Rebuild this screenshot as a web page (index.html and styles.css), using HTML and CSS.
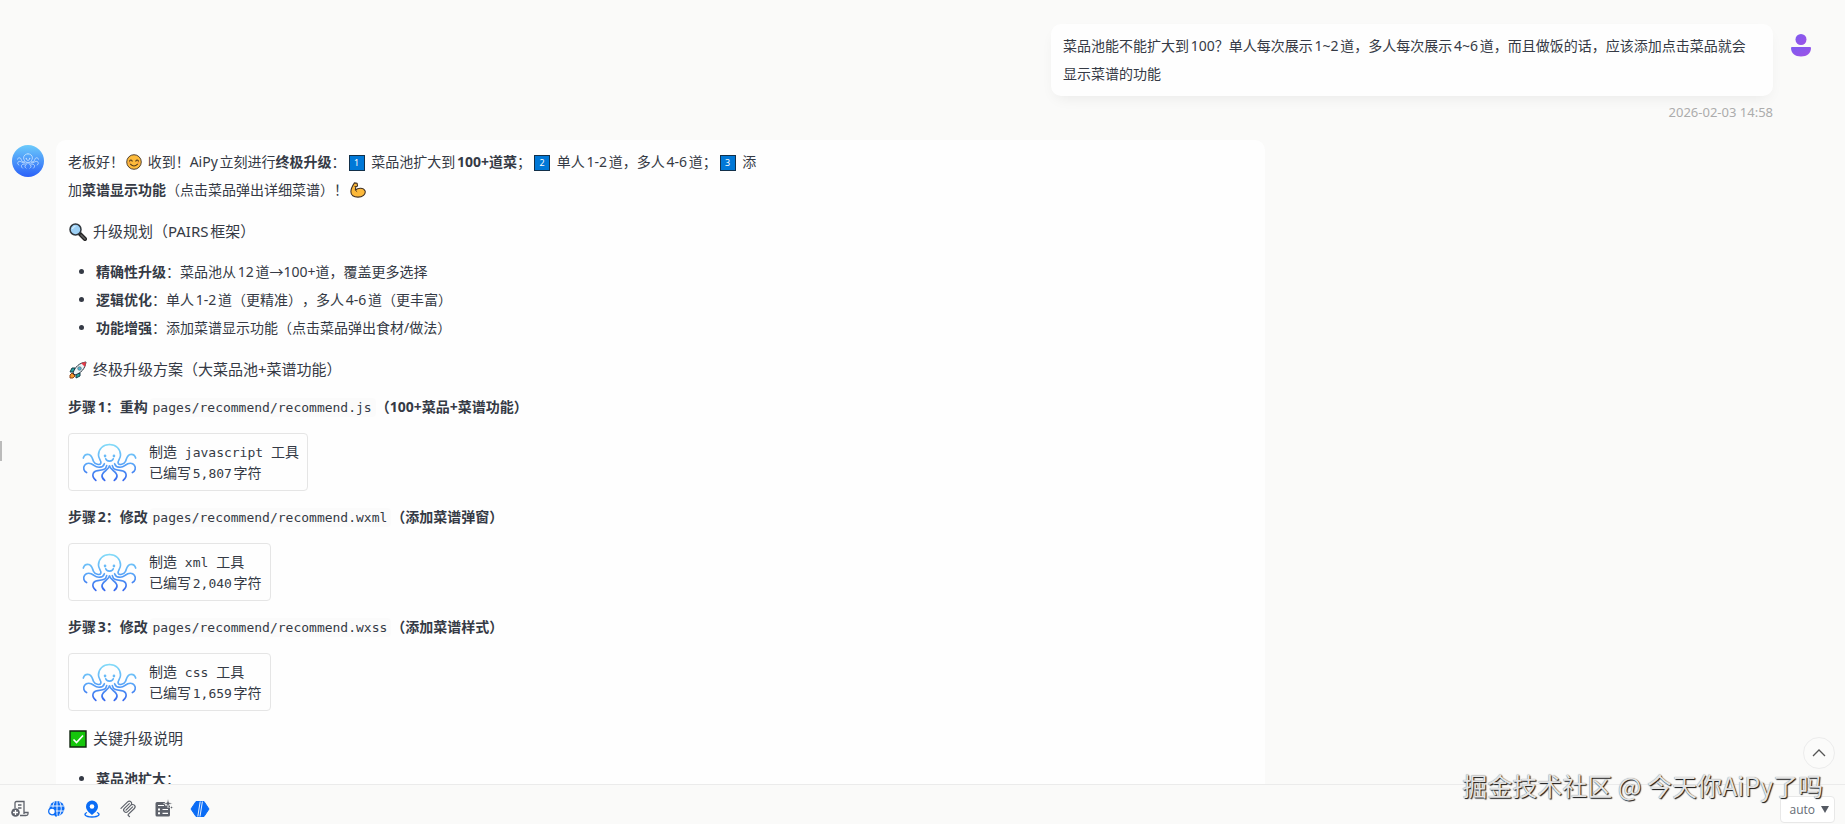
FILE: index.html
```html
<!DOCTYPE html>
<html lang="zh-CN">

<head>
    <meta charset="UTF-8">
    <meta name="viewport" content="width=device-width, initial-scale=1.0">
    <title>AiPy</title>
    <link rel="stylesheet" href="styles.css">
</head>

<body>
    <!-- shared drawings -->
    <svg class="defs" width="0" height="0" aria-hidden="true">
        <defs>
            <linearGradient id="blue" gradientUnits="userSpaceOnUse" x1="0" y1="36" x2="0" y2="150">
                <stop offset="0" stop-color="#84dcf8" />
                <stop offset="0.5" stop-color="#5aa9f8" />
                <stop offset="1" stop-color="#3565ee" />
            </linearGradient>
            <linearGradient id="purple" x1="0" y1="0" x2="1" y2="1">
                <stop offset="0" stop-color="#7c5cf0" />
                <stop offset="1" stop-color="#a052e6" />
            </linearGradient>
            <g id="arms">
                <path d="M117.500 38C98 38 84 51 84 70C84 82 94 87 91 95C88 101 74 99 69 89C65 80 64 69 53 68C45 67 40 72 38 79" />
                <path d="M102 96C97 110 80 109 70 101C60 94 48 93 42 101C36 109 40 119 48 123" />
                <path d="M109 102C107 115 94 116 82 117C66 119 61 134 76 147" />
                <path d="M117.500 103C116 115 98 118 95 130C93 138 98 143 103 147" />
            </g>
            <symbol id="octopus" viewBox="34 34 167 117">
                <g fill="none" stroke-width="5" stroke-linecap="round">
                    <use href="#arms" />
                    <use href="#arms" transform="translate(235 0) scale(-1 1)" />
                    <path d="M106 81C108 91 127 91 129 81" />
                    <path d="M104 72V73M131 72V73" stroke-width="8" />
                </g>
            </symbol>
        </defs>
    </svg>

    <main class="chat">
        <div class="message user">
            <div class="bubble">菜品池能不能扩大到100？单人每次展示1~2道，多人每次展示4~6道，而且做饭的话，应该添加点击菜品就会显示菜谱的功能</div>
            <svg class="avatar" viewBox="0 0 32 32" fill="url(#purple)">
                <circle cx="16" cy="10.500" r="5.500" />
                <path d="M7 18H25Q26 18 26 19C26 24 22 27.500 16 27.500S6 24 6 19Q6 18 7 18Z" />
            </svg>
        </div>
        <time class="time">2026-02-03 14:58</time>

        <div class="message bot">
            <div class="avatar logo"><svg stroke="#e6f5ff"><use href="#octopus" /></svg></div>
            <div class="bubble">
                <p>老板好！<svg class="emoji" viewBox="0 0 18 18"><circle cx="9" cy="9" r="8.200" fill="#fdbb3c" stroke="#403024" /><path d="M4 8Q5.500 5.500 7 8M11 8Q12.500 5.500 14 8M5 11.500Q9 15.500 13 11.500" fill="none" stroke="#54391c" stroke-width="1.200" stroke-linecap="round" /><path d="M3 10H5M13 10H15" stroke="#f58b48" stroke-width="1.500" /></svg>
                    收到！AiPy立刻进行<strong>终极升级</strong>：<span class="keycap">1</span>
                    菜品池扩大到<strong>100+道菜</strong>；<span class="keycap">2</span>
                    单人1-2道，多人4-6道；<span class="keycap">3</span>
                    添<br>加<strong>菜谱显示功能</strong>（点击菜品弹出详细菜谱）！<svg class="emoji" viewBox="0 0 18 18"><path d="M5 1L8 1.500L8.500 4.500L6.500 5.500L6 9C9 6.500 15 6 17 10C18 14 14 17 9 17C4 17 1 15 1 11C1 7 3 4 5 1Z" fill="#fcb93b" stroke="#403024" stroke-width="1.200" stroke-linejoin="round" /><path d="M6 9L8 11M5 5H7" fill="none" stroke="#403024" /></svg></p>

                <h3><svg class="emoji" viewBox="0 0 18 18"><path d="M10.500 10.500L16 16" stroke="#222" stroke-width="4" stroke-linecap="round" /><path d="M12 12L16 16" stroke="#666" stroke-width="1.500" stroke-linecap="round" /><circle cx="6.500" cy="6.500" r="5.500" fill="#9dd0f5" stroke="#30363d" stroke-width="1.500" /><path d="M3.500 6Q4 3.500 6.500 3.500" fill="none" stroke="#d6efff" stroke-width="1.200" /></svg>
                    升级规划（PAIRS框架）</h3>
                <ul>
                    <li><strong>精确性升级</strong>：菜品池从12道→100+道，覆盖更多选择</li>
                    <li><strong>逻辑优化</strong>：单人1-2道（更精准），多人4-6道（更丰富）</li>
                    <li><strong>功能增强</strong>：添加菜谱显示功能（点击菜品弹出食材/做法）</li>
                </ul>

                <h3><svg class="emoji" viewBox="0 0 18 18"><path d="M3 12L1 14L1 17L4 17L6 15Z" fill="#f79a2e" stroke="#8c451a" /><path d="M6 7H3L1 11L5 11ZM11 12V15L7 17V13Z" fill="#26a6a0" stroke="#163f4a" /><path d="M4 12C6 6 10 2 17 1C16 8 12 12 6 14Z" fill="#e9f3f7" stroke="#263540" /><path d="M12 2L17 1L16 6Z" fill="#e53947" /><circle cx="10.500" cy="7.500" r="1.800" fill="#50b4cf" stroke="#5d6872" stroke-width="0.700" /></svg>
                    终极升级方案（大菜品池+菜谱功能）</h3>

                <p class="step">步骤1：重构<code>pages/recommend/recommend.js</code>（100+菜品+菜谱功能）</p>
                <div class="tool">
                    <svg stroke="url(#blue)"><use href="#octopus" /></svg>
                    <div>制造<code> javascript </code>工具<br>已编写<code>5,807</code>字符</div>
                </div>

                <p class="step">步骤2：修改<code>pages/recommend/recommend.wxml</code>（添加菜谱弹窗）</p>
                <div class="tool">
                    <svg stroke="url(#blue)"><use href="#octopus" /></svg>
                    <div>制造<code> xml </code>工具<br>已编写<code>2,040</code>字符</div>
                </div>

                <p class="step">步骤3：修改<code>pages/recommend/recommend.wxss</code>（添加菜谱样式）</p>
                <div class="tool">
                    <svg stroke="url(#blue)"><use href="#octopus" /></svg>
                    <div>制造<code> css </code>工具<br>已编写<code>1,659</code>字符</div>
                </div>

                <h3><svg class="emoji" viewBox="0 0 18 18"><path d="M1 1H17V17H1Z" fill="#16c60c" stroke="#10250f" stroke-width="1.400" /><path d="M4.500 9.500L7.500 12.500L14 5.500" fill="none" stroke="#fff" stroke-width="1.600" /></svg>
                    关键升级说明</h3>
                <ul>
                    <li><strong>菜品池扩大</strong>：</li>
                </ul>
            </div>
        </div>
    </main>

    <footer class="toolbar">
        <button type="button" aria-label="添加任务"><svg viewBox="0 0 18 18" fill="none" stroke="#5e626b" stroke-width="1.300"><path d="M4 8V3Q4 1.500 5.500 1.500H13V14M13 12.500H17V14Q17 15.500 15 15.500H9M7 5H10.500M7 8H10.500" /><circle cx="4.500" cy="12.500" r="4.300" fill="#5e626b" stroke="none" /><path d="M4.500 10V15M2 12.500H7" stroke="#fff" /></svg></button>
        <button type="button" aria-label="联网搜索"><svg viewBox="0 0 18 18"><circle cx="10" cy="8.500" r="7.500" fill="#0b6cf5" /><path d="M2.500 6H17.500M2.500 11H17.500M10 1V16M7.500 1.500Q4 8.500 7.500 15.500M12.500 1.500Q16 8.500 12.500 15.500" fill="none" stroke="#fff" stroke-width="0.900" /><circle cx="5" cy="11.500" r="3.300" fill="#fff" stroke="#0b6cf5" stroke-width="1.300" /><path d="M7.500 14L9.500 16.500" stroke="#0b6cf5" stroke-width="1.500" /></svg></button>
        <button type="button" aria-label="位置"><svg viewBox="0 0 18 18"><path d="M4 12.500C0 14 2 17 9 17S18 14 14 12.500" fill="none" stroke="#0b6cf5" stroke-width="1.300" /><path d="M9 0.500A6 6 0 0 0 3 6.500C3 10 6 12.500 9 15C12 12.500 15 10 15 6.500A6 6 0 0 0 9 0.500Z" fill="#0b6cf5" /><circle cx="9" cy="6.500" r="2.300" fill="#fff" /></svg></button>
        <button type="button" aria-label="MCP"><svg viewBox="-1 -1 26 26" fill="#5e626b"><path d="M15.688 2.343a2.588 2.588 0 00-3.610 0l-9.626 9.440a.863.863 0 01-1.203 0 .823.823 0 010-1.180l9.626-9.440a4.313 4.313 0 016.016 0 4.116 4.116 0 011.204 3.540 4.300 4.300 0 013.609 1.180l.050.050a4.115 4.115 0 010 5.900l-8.706 8.537a.274.274 0 000 .393l1.788 1.754a.823.823 0 010 1.180.863.863 0 01-1.203 0l-1.788-1.753a1.920 1.920 0 010-2.754l8.706-8.538a2.470 2.470 0 000-3.540l-.050-.049a2.588 2.588 0 00-3.607-.003l-7.172 7.034-.002.002-.098.097a.863.863 0 01-1.204 0 .823.823 0 010-1.180l7.273-7.133a2.470 2.470 0 00-.003-3.537z" /><path d="M14.485 4.703a.823.823 0 000-1.180.863.863 0 00-1.204 0l-7.119 6.982a4.115 4.115 0 000 5.900 4.314 4.314 0 006.016 0l7.120-6.982a.823.823 0 000-1.180.863.863 0 00-1.204 0l-7.119 6.982a2.588 2.588 0 01-3.610 0 2.470 2.470 0 010-3.540l7.120-6.982z" /></svg></button>
        <button type="button" aria-label="工具"><svg viewBox="0 0 18 18"><path d="M2 2H10V5.500H15V15Q15 16.500 13.500 16.500H2Q0.500 16.500 0.500 15V3.500Q0.500 2 2 2Z" fill="#5e626b" /><path d="M3 5.500H9M7.500 9.500H13M7.500 13.300H13" stroke="#fff" stroke-width="1.200" /><path d="M3 8.500H5V10.500H3ZM3 12.300H5V14.300H3Z" fill="#fff" /><path d="M13 -1L14 2.500L17.500 3.500L14 4.500L13 8L12 4.500L8.500 3.500L12 2.500ZM16.500 5.500L17 7L18.500 7.500L17 8L16.500 9.500L16 8L14.500 7.500L16 7Z" fill="#5e626b" stroke="#fafaf9" stroke-width="0.500" /></svg></button>
        <button type="button" aria-label="模型"><svg viewBox="0 0 18 18"><path d="M5 1.500H13L18 9L13 16.500H5L0 9Z" fill="#0b6cf5" stroke="#0b6cf5" stroke-linejoin="round" /><path d="M6.800 16.500L9.200 1.500M9 16.500L11.400 1.500" stroke="#fff" stroke-width="0.900" /></svg></button>
        <button type="button" class="mode" aria-haspopup="listbox">auto <svg viewBox="0 0 8 7"><path d="M0 0H8L4 7Z" fill="#555a63" /></svg></button>
    </footer>

    <button type="button" class="to-top" aria-label="回到顶部"><svg viewBox="0 0 14 8"><path d="M1 7L7 1L13 7" fill="none" stroke="#555" stroke-width="1.300" /></svg></button>
    <div class="handle"></div>
    <div class="watermark">掘金技术社区 @ 今天你AiPy了吗</div>
</body>

</html>
```

FILE: styles.css
```css
* {
    box-sizing: border-box;
}

body {
    margin: 0;
    height: 100vh;
    display: flex;
    flex-direction: column;
    overflow: hidden;
    background: #fafaf9;
    color: #353a45;
    font: 14px/28px "Noto Sans", "Noto Sans CJK SC", sans-serif;
    text-autospace: normal;
    text-spacing-trim: space-all;
}

.defs {
    position: absolute;
}

/* messages */
.chat {
    flex: 1;
    min-height: 0;
    overflow: hidden;
    padding: 24px 28px 0 12px;
}

.message {
    display: flex;
    align-items: flex-start;
    gap: 12px;
}

.user {
    justify-content: flex-end;
}

.bubble {
    background: #fefefe;
    border-radius: 10px;
    padding: 8px 12px;
}

.user .bubble {
    width: 40%;
    padding-right: 20px;
    box-shadow: 0 6px 16px -6px rgba(0, 0, 0, 0.09);
}

.bot .bubble {
    width: 67%;
}

.avatar {
    flex: none;
    width: 32px;
    height: 32px;
    margin-top: 5px;
}

.logo {
    display: flex;
    align-items: center;
    justify-content: center;
    border-radius: 50%;
    background: linear-gradient(#6ccbfb, #2a60f8);
}

.logo svg {
    width: 22px;
    height: 16px;
}

.time {
    display: block;
    margin: 6px 44px 18px;
    text-align: right;
    font-size: 13px;
    line-height: 20px;
    color: #acacac;
}

/* answer content */
p {
    margin: 0;
}

h3 {
    margin: 15px 0 0;
    font-size: 15px;
    font-weight: 400;
    line-height: 24px;
}

ul {
    margin: 15px 0 0;
    padding-left: 28px;
}

.emoji {
    width: 16px;
    height: 16px;
    margin: 0 2px;
    vertical-align: -3px;
}

h3 .emoji {
    width: 18px;
    height: 18px;
    margin: 0 2px 0 1px;
    vertical-align: -4px;
}

.keycap {
    display: inline-block;
    width: 16px;
    height: 16px;
    margin: 0 3px;
    border: 1px solid #12304a;
    background: #0078d7;
    color: #fff;
    font-size: 9px;
    line-height: 14px;
    text-align: center;
    vertical-align: 1px;
}

code {
    font-family: "DejaVu Sans Mono", monospace;
    font-size: 13px;
    line-height: 14px;
    white-space: pre;
}

.step {
    margin: 12px 0;
    font-weight: 700;
}

.step code {
    padding: 2px 4px 2px 3px;
    border-radius: 4px;
    background: #fbfbfb;
    font-weight: 400;
}

.tool {
    display: flex;
    align-items: center;
    gap: 12px;
    width: fit-content;
    height: 58px;
    padding: 0 8px 0 13px;
    border: 1px solid #e5e5e5;
    border-radius: 4px;
    line-height: 21px;
}

.tool svg {
    width: 55px;
    height: 39px;
}

/* bottom bar */
.toolbar {
    display: flex;
    align-items: center;
    gap: 18px;
    height: 40px;
    padding: 9px 10px 0 11px;
    border-top: 1px solid #ebebeb;
}

button {
    padding: 0;
    border: 0;
    background: none;
    cursor: pointer;
}

.toolbar svg {
    display: block;
    width: 18px;
    height: 18px;
    overflow: visible;
}

.toolbar .mode {
    display: flex;
    align-items: center;
    gap: 6px;
    height: 27px;
    margin-left: auto;
    padding: 0 5px 0 8px;
    border: 1px solid #e8e8e8;
    border-radius: 4px;
    background: #fff;
    color: #666b75;
    font: 12px "Open Sans", sans-serif;
}

.toolbar .mode svg {
    width: 8px;
    height: 7px;
}

.to-top {
    position: absolute;
    right: 10px;
    bottom: 55px;
    width: 32px;
    height: 32px;
    border: 1px solid #ececec;
    border-radius: 50%;
    background: #fbfbfa;
}

.to-top svg {
    display: block;
    width: 14px;
    height: 8px;
    margin: auto;
}

.handle {
    position: absolute;
    left: 0;
    top: 441px;
    width: 2px;
    height: 20px;
    background: #bbb;
}

.watermark {
    position: absolute;
    right: 22px;
    bottom: 20px;
    color: #e4e4e4;
    font: 25px/38px "Noto Sans CJK SC", sans-serif;
    text-autospace: no-autospace;
    text-shadow: 1px 1px 1px #111, 0 0 1px #777;
    pointer-events: none;
}
```
